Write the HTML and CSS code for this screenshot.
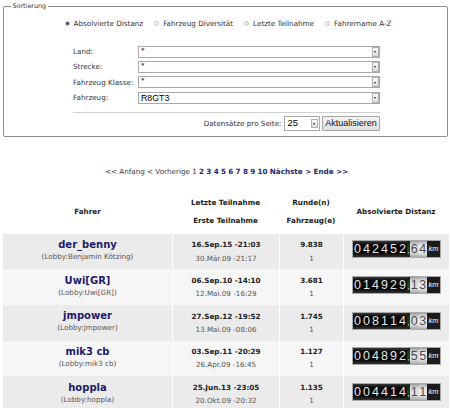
FILE: index.html
```html
<!DOCTYPE html>
<html lang="de">
<head>
<meta charset="utf-8">
<title>Rangliste</title>
<link rel="stylesheet" href="styles.css">
</head>
<body>
<fieldset class="sort">
  <legend>Sortierung</legend>
  <div class="radios">
    <label class="radio"><span class="dot on"></span>Absolvierte Distanz</label>
    <label class="radio"><span class="dot"></span>Fahrzeug Diversität</label>
    <label class="radio"><span class="dot"></span>Letzte Teilnahme</label>
    <label class="radio"><span class="dot"></span>Fahrername A-Z</label>
  </div>
  <div class="filters">
    <div class="frow"><span class="flabel">Land:</span><span class="sel"><span class="val">*</span><span class="arrow"></span></span></div>
    <div class="frow"><span class="flabel">Strecke:</span><span class="sel"><span class="val">*</span><span class="arrow"></span></span></div>
    <div class="frow"><span class="flabel">Fahrzeug Klasse:</span><span class="sel"><span class="val">*</span><span class="arrow"></span></span></div>
    <div class="frow"><span class="flabel">Fahrzeug:</span><span class="sel"><span class="val big">R8GT3</span><span class="arrow"></span></span></div>
    <div class="sep"></div>
    <div class="perpage">
      <span class="pp-label">Datensätze pro Seite:</span>
      <span class="sel small"><span class="val big">25</span><span class="arrow"></span></span>
      <button class="btn" type="button">Aktualisieren</button>
    </div>
  </div>
</fieldset>

<nav class="pages">&lt;&lt; Anfang &lt; Vorherige 1 <b>2</b> <b>3</b> <b>4</b> <b>5</b> <b>6</b> <b>7</b> <b>8</b> <b>9</b> <b>10</b> <b>Nächste &gt;</b> <b>Ende &gt;&gt;</b></nav>

<table class="ranks">
  <colgroup><col class="c1"><col class="c2"><col class="c3"><col class="c4"></colgroup>
  <thead>
    <tr>
      <th>Fahrer</th>
      <th class="two">Letzte Teilnahme<br>Erste Teilnahme</th>
      <th class="two">Runde(n)<br>Fahrzeug(e)</th>
      <th>Absolvierte Distanz</th>
    </tr>
  </thead>
  <tbody>
    <tr>
      <td class="who"><span class="name">der_benny</span><span class="lobby">(Lobby:Benjamin Kötzing)</span></td>
      <td class="dates"><span class="d1">16.Sep.15 -21:03</span><span class="d2">30.Mär.09 -21:17</span></td>
      <td class="dates"><span class="d1">9.838</span><span class="d2">1</span></td>
      <td class="odo-cell"><span class="odo"><span class="dg">0</span><span class="dg">4</span><span class="dg">2</span><span class="dg">4</span><span class="dg">5</span><span class="dg">2</span><span class="cm">,</span><span class="dc">6</span><span class="dc">4</span><span class="km">km</span></span></td>
    </tr>
    <tr>
      <td class="who"><span class="name">Uwi[GR]</span><span class="lobby">(Lobby:Uwi[GR])</span></td>
      <td class="dates"><span class="d1">06.Sep.10 -14:10</span><span class="d2">12.Mai.09 -16:29</span></td>
      <td class="dates"><span class="d1">3.681</span><span class="d2">1</span></td>
      <td class="odo-cell"><span class="odo"><span class="dg">0</span><span class="dg">1</span><span class="dg">4</span><span class="dg">9</span><span class="dg">2</span><span class="dg">9</span><span class="cm">,</span><span class="dc">1</span><span class="dc">3</span><span class="km">km</span></span></td>
    </tr>
    <tr>
      <td class="who"><span class="name">jmpower</span><span class="lobby">(Lobby:jmpower)</span></td>
      <td class="dates"><span class="d1">27.Sep.12 -19:52</span><span class="d2">13.Mai.09 -08:06</span></td>
      <td class="dates"><span class="d1">1.745</span><span class="d2">1</span></td>
      <td class="odo-cell"><span class="odo"><span class="dg">0</span><span class="dg">0</span><span class="dg">8</span><span class="dg">1</span><span class="dg">1</span><span class="dg">4</span><span class="cm">,</span><span class="dc">0</span><span class="dc">3</span><span class="km">km</span></span></td>
    </tr>
    <tr>
      <td class="who"><span class="name">mik3 cb</span><span class="lobby">(Lobby:mik3 cb)</span></td>
      <td class="dates"><span class="d1">03.Sep.11 -20:29</span><span class="d2">26.Apr.09 -16:45</span></td>
      <td class="dates"><span class="d1">1.127</span><span class="d2">1</span></td>
      <td class="odo-cell"><span class="odo"><span class="dg">0</span><span class="dg">0</span><span class="dg">4</span><span class="dg">8</span><span class="dg">9</span><span class="dg">2</span><span class="cm">,</span><span class="dc">5</span><span class="dc">5</span><span class="km">km</span></span></td>
    </tr>
    <tr>
      <td class="who"><span class="name">hoppla</span><span class="lobby">(Lobby:hoppla)</span></td>
      <td class="dates"><span class="d1">25.Jun.13 -23:05</span><span class="d2">20.Okt.09 -20:32</span></td>
      <td class="dates"><span class="d1">1.135</span><span class="d2">1</span></td>
      <td class="odo-cell"><span class="odo"><span class="dg">0</span><span class="dg">0</span><span class="dg">4</span><span class="dg">4</span><span class="dg">1</span><span class="dg">4</span><span class="cm">,</span><span class="dc">1</span><span class="dc">1</span><span class="km">km</span></span></td>
    </tr>
  </tbody>
</table>
</body>
</html>
```
FILE: styles.css
```css
html, body {
  margin: 0;
  padding: 0;
  background: #fff;
}
body {
  width: 450px;
  font-family: "DejaVu Sans", Verdana, sans-serif;
  font-size: 7.2px;
  color: #222;
  overflow: hidden;
}

/* ---------- Sortierung ---------- */
.sort {
  margin: 2px 2px 0 3px;
  padding: 0 0 5.5px 0;
  border: 1px solid #8f8f8f;
  border-radius: 2px;
  min-width: 0;
}
.sort legend {
  font-size: 6.4px;
  line-height: 8px;
  padding: 0 1.5px;
  margin-left: 7px;
  color: #333;
}
.radios {
  display: flex;
  justify-content: center;
  align-items: center;
  gap: 11px;
  height: 10px;
  margin-top: 8px;
  padding-left: 5px;
}
.radio {
  display: flex;
  align-items: center;
  gap: 4px;
  color: #333;
}
.dot {
  width: 5px;
  height: 5px;
  border-radius: 50%;
  border: 1px solid #c4c4c4;
  box-sizing: border-box;
  background: radial-gradient(circle, #fff 0, #e6e6e6 100%);
}
.dot.on {
  border-color: #a8b0bb;
  background: radial-gradient(circle, #2f4f86 0, #2f4f86 1.2px, #e7ecf3 1.9px);
}

.filters {
  margin: 17.7px 0 0 69px;
  width: 307px;
}
.frow {
  display: flex;
  align-items: center;
  height: 12px;
  margin-bottom: 3.3px;
}
.frow:nth-child(4) {
  margin-bottom: 0;
}
.flabel {
  width: 65px;
  color: #333;
}
.sel {
  flex: 1;
  height: 12px;
  box-sizing: border-box;
  border: 1px solid #a9a9a9;
  background: #fff;
  display: flex;
  align-items: center;
}
.val {
  flex: 1;
  padding-left: 2px;
  color: #111;
  align-self: flex-start;
  line-height: 8px;
}
.val.big {
  align-self: center;
  font-family: "Liberation Sans", Arial, sans-serif;
  font-size: 8.8px;
  line-height: 10px;
  color: #000;
}
.arrow {
  position: relative;
  width: 6.5px;
  height: 10px;
  margin-right: 0.5px;
  box-sizing: border-box;
  border: 1px solid #b0b0b0;
  background: linear-gradient(#fbfbfb, #dcdcdc);
}
.arrow::after {
  content: "";
  position: absolute;
  left: 1px;
  top: 3.5px;
  border-left: 1.25px solid transparent;
  border-right: 1.25px solid transparent;
  border-top: 2px solid #222;
}
.sep {
  height: 1px;
  background: #cfcfcf;
  margin-top: 8px;
}
.perpage {
  display: flex;
  justify-content: flex-end;
  align-items: center;
  gap: 2px;
  height: 15px;
  margin-top: 3.3px;
}
.pp-label {
  color: #333;
  margin-right: 0.5px;
}
.sel.small {
  flex: none;
  width: 36px;
  height: 15px;
}
.sel.small .val.big {
  font-size: 9.5px;
  padding-left: 2.5px;
}
.sel.small .arrow {
  height: 9px;
  margin-right: 1.5px;
}
.btn {
  width: 58px;
  height: 15px;
  padding: 0;
  margin: 0;
  border: 1px solid #a6a6a6;
  border-radius: 1px;
  background: linear-gradient(#f4f4f4, #dfdfdf);
  font-family: "Liberation Sans", Arial, sans-serif;
  font-size: 9px;
  color: #111;
}

/* ---------- Pagination ---------- */
.pages {
  margin-top: 30px;
  text-align: center;
  line-height: 9px;
  color: #3b3d4c;
  padding-left: 3px;
}
.pages b {
  color: #1d2a6c;
}

/* ---------- Table ---------- */
.ranks {
  margin: 13.5px 0 0 3px;
  width: 446px;
  border-collapse: separate;
  border-spacing: 0;
  table-layout: fixed;
}
.c1 { width: 169px; }
.c2 { width: 107px; }
.c3 { width: 64px; }
.c4 { width: 106px; }

.ranks th {
  height: 44px;
  padding: 0;
  font-weight: bold;
  color: #222;
  text-align: center;
  vertical-align: middle;
  line-height: 10px;
}
.ranks th.two {
  line-height: 18px;
}
.ranks td {
  height: 35.6px;
  padding: 0;
  text-align: center;
  vertical-align: middle;
  box-sizing: border-box;
}
.ranks td + td {
  border-left: 1px solid #fff;
}
.ranks tbody tr:nth-child(odd) td {
  background: #ebebeb;
}
.ranks tbody tr:nth-child(even) td {
  background: #f6f6f6;
}
.who {
  padding-bottom: 2px !important;
}
.name {
  display: block;
  font-size: 10px;
  font-weight: bold;
  line-height: 12px;
  color: #1c1c6b;
}
.lobby {
  display: block;
  line-height: 11px;
  color: #555;
}
.d1 {
  display: block;
  font-weight: bold;
  line-height: 13.3px;
  color: #222;
}
.d2 {
  display: block;
  line-height: 13.3px;
  color: #555;
}

/* ---------- Odometer ---------- */
.odo-cell {
  padding-bottom: 4.5px !important;
}
.odo {
  display: inline-flex;
  height: 16px;
  border: 1px solid #a9a9a9;
  background: #000;
  font-family: "Liberation Sans", Arial, sans-serif;
  vertical-align: middle;
}
.dg, .dc {
  width: 9px;
  text-align: center;
  font-size: 12.5px;
  line-height: 16px;
}
.dg {
  color: #e4e4e4;
  background: linear-gradient(#3a3a3a 0, #080808 22%, #050505 72%, #333 100%);
}
.dc {
  width: 8.6px;
  color: #4a4a4a;
  background: linear-gradient(#9c9c9c 0, #dadada 25%, #e2e2e2 70%, #a5a5a5 100%);
}
.dc + .dc {
  background: linear-gradient(#a8a8a8 0, #e6e6e6 25%, #ececec 70%, #b0b0b0 100%);
}
.cm {
  width: 3px;
  color: #d0d0d0;
  font-size: 9px;
  line-height: 18px;
  text-align: center;
  background: linear-gradient(#0d2a10, #17481b 50%, #0d2a10);
  overflow: hidden;
}
.km {
  width: 13px;
  color: #fff;
  background: #1c1c1c;
  font-size: 7.5px;
  font-style: italic;
  line-height: 16px;
  text-align: center;
}
```
